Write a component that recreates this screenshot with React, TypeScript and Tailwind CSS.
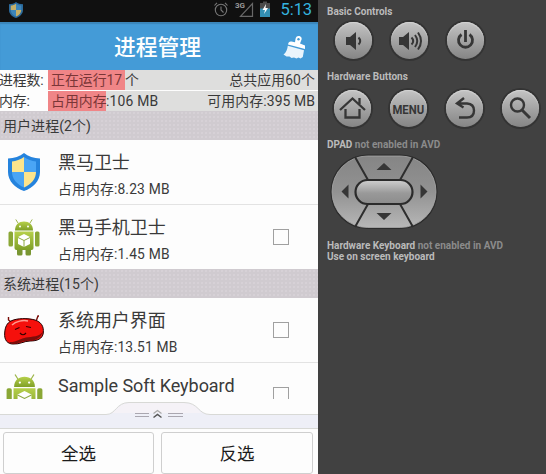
import React from "react";

const FONT = "font-['Roboto','Noto_Sans_CJK_SC',sans-serif]";

function Shield({ className, dim = false }: { className: string; dim?: boolean }) {
  const blue = dim ? "#2b6a9c" : "#2583dd";
  const light = dim ? "#3d86ba" : "#4aa5f5";
  const yellow = dim ? "#c5af68" : "#fde48b";
  return (
    <svg className={className} viewBox="0 0 32 38" preserveAspectRatio="none">
      <path d="M16 0C12 3.500 6 5 0 5.500V19C0 28 7 35 16 38C25 35 32 28 32 19V5.500C26 5 20 3.500 16 0Z" fill={blue} />
      <path d="M16 4C12.500 6.500 8 8 4 8.500V19H16Z" fill={yellow} />
      <path d="M16 4C19.500 6.500 24 8 28 8.500V19H16Z" fill={light} />
      <path d="M4 19H16V34.500C9 31.500 4 26 4 19Z" fill={light} />
      <path d="M28 19H16V34.500C23 31.500 28 26 28 19Z" fill={yellow} />
    </svg>
  );
}

function Android({ className }: { className: string }) {
  return (
    <svg className={className} viewBox="0 0 32 37" preserveAspectRatio="none">
      <defs>
        <linearGradient id="droid" x1="0" y1="0" x2="0" y2="1">
          <stop offset="0" stopColor="#b6d04a" />
          <stop offset="1" stopColor="#7f9f28" />
        </linearGradient>
      </defs>
      <path d="M10 4L8 .8M22 4L24 .8" stroke="#9db54c" strokeWidth="1" strokeLinecap="round" />
      <path d="M7 11.500C7 5.500 11 2.500 16 2.500S25 5.500 25 11.500Z" fill="url(#droid)" />
      <circle cx="12" cy="7.500" r="1" fill="#fff" />
      <circle cx="20" cy="7.500" r="1" fill="#fff" />
      <rect x=".5" y="12.500" width="4.500" height="15" rx="1.500" fill="#8aa735" />
      <rect x="27" y="12.500" width="4.500" height="15" rx="1.500" fill="#8aa735" />
      <path d="M9 27H14.500V35Q14.500 36.500 13 36.500H10.500Q9 36.500 9 35ZM17.500 27H23V35Q23 36.500 21.500 36.500H19Q17.500 36.500 17.500 35Z" fill="#799632" />
      <path d="M6.500 12.500H25.500V29Q25.500 31 23.500 31H8.500Q6.500 31 6.500 29Z" fill="url(#droid)" />
      <path d="M16 15L22 18V25L16 28L10 25V18Z" fill="#fff" />
      <path d="M10 18.500L16 21.500L22 18.500M16 21.500V28" stroke="#8eaa42" strokeWidth="1" fill="none" />
    </svg>
  );
}

function Bean({ className }: { className: string }) {
  return (
    <svg className={className} viewBox="0 0 40 31">
      <path d="M7 7L4.500 5V2M32.500 5L34 1H35" stroke="#7a0b06" strokeWidth="1.400" fill="none" />
      <path d="M7 6C13 3 24 3 31 5C37 7 40 11 39.300 18C38.500 24 33 26 26 26C20 26 16 29.500 9 29C3.500 29 0 25 .7 18C1 12 3 8 7 6Z" fill="#f5100c" stroke="#210000" strokeWidth="1" />
      <path d="M39 16C36 22 28 21.500 22 22.500C17 23.500 12 27.500 5 27C8 30 15 28 20 26C26 25.500 36 27 39 16Z" fill="#7d0d0a" />
      <path d="M8 10C12 6 19 5 24 6" stroke="#ff9c91" strokeWidth="1.500" fill="none" />
      <path d="M11 14.500L15.500 12.500M22 11.500L27 12.500M16 18Q19 21.500 22 18" stroke="#350201" strokeWidth="1.200" fill="none" />
    </svg>
  );
}

function StatusBar() {
  return (
    <div className="flex h-[22px] items-start bg-[#101010] pl-[9px] pr-[6px]">
      <Shield dim className="mt-[2px] h-4 w-[14px]" />
      <svg className="ml-[190px] mt-[1px] h-[17px] w-[60px]" viewBox="213 1 60 17" fill="none">
        <circle cx="221" cy="10" r="5.700" stroke="#777" strokeWidth="1.100" />
        <path d="M221 6.500V10L223.500 12.500M214.500 5.500L217 2.800M227.500 5.500L225 2.800" stroke="#777" strokeWidth="1.100" />
        <path d="M240.500 16.300H252.500V3.500Z" stroke="#686868" strokeWidth="1.200" />
        <text x="235" y="8.300" fontSize="8" fontWeight="700" fill="#999" fontFamily="Roboto">3G</text>
        <path d="M263 1.500H267V3H270V9H260V3H263Z" fill="#4b4b4b" />
        <path d="M260 8.500H270V17H260Z" fill="#338fb4" />
        <path d="M266 4L262.500 10H265L264 14L268 8H265.500Z" fill="#fff" />
      </svg>
      <span className="ml-auto text-[16.500px] leading-[20px] tracking-[-0.100px] text-[#35b3df]">5:13</span>
    </div>
  );
}

function Header() {
  return (
    <div className="grid h-12 grid-cols-[1fr_auto_1fr] items-center bg-[#449bd7] shadow-[inset_0_2px_1px_#3b86ba]">
      <span />
      <h1 className="pr-[3px] pt-[2px] text-[21.800px] font-medium leading-[48px] text-white">进程管理</h1>
      <svg className="mr-3 h-[23px] w-[23px] justify-self-end" viewBox="0 0 23 23">
        <path d="M15.500 0C18.500 0 19.500 2.500 18 5L17 7.500L22 9.500V13L5 8.500Q5.500 5 8.500 5.500L12 6.300L12.500 3Q13 0 15.500 0Z" fill="#fff" />
        <circle cx="15.500" cy="3.200" r="1.200" fill="#449bd7" />
        <path d="M4.800 9.800L21 14.300L19.800 21L17.500 22.500L15.500 21.500L13.500 22.500L11 21.500L8.500 22L6.500 20.500L3.500 20.500L.5 18.500C3 17 4.500 13 4.800 9.800Z" fill="#e9f4fc" />
      </svg>
    </div>
  );
}

function InfoRow({ label, mark, rest, right, markClass }: { label: string; mark: string; rest: string; right: string; markClass: string }) {
  return (
    <div className="flex h-[20px] whitespace-nowrap text-[13.900px] leading-[21px] text-[#393939]">
      <span className="w-12 shrink-0 bg-[#fdfdfd] tracking-[-0.100px]"><span className="-ml-px">{label}</span></span>
      <div className="flex flex-1 bg-[#dededd] pr-[3px]">
        <span className={`${markClass} bg-[#f08587] pl-[3px] text-[#7a3637]`}>{mark}</span>
        <span className="-ml-px pl-px tracking-[0.200px]">{rest}</span>
        <span className="ml-auto tracking-[0.100px]">{right}</span>
      </div>
    </div>
  );
}

function Section({ children }: { children: React.ReactNode }) {
  return (
    <div className="h-[29px] bg-[#d0cbd0] bg-[radial-gradient(#d7d2d7_0.7px,transparent_0.8px)] bg-[size:4px_4px] pl-[3px] text-[14px] leading-[31px] tracking-[0.050px] text-[#393939]">
      {children}
    </div>
  );
}

function Row({ icon, name, mem, check = true, line = true }: { icon: React.ReactNode; name: string; mem?: string; check?: boolean; line?: boolean }) {
  return (
    <div className={`flex items-center bg-[#fdfdfd] ${line ? "h-[65px] border-b border-[#e3e3e3]" : "h-[64px]"}`}>
      <div className="flex w-[58px] shrink-0">{icon}</div>
      <div className="flex h-16 flex-1 flex-col whitespace-nowrap pt-[9px] text-[#3a3a3a]">
        <span className="text-[18px] leading-[27px] tracking-[-0.050px]">{name}</span>
        {mem && <span className="text-[13.800px] leading-[27px] tracking-[0.180px]">{mem}</span>}
      </div>
      {check && <span className="mr-[29px] size-4 border border-[#a0a0a0]" />}
    </div>
  );
}

function Drawer() {
  return (
    <svg className="h-[30px] w-[318px] bg-[#fdfdfd]" viewBox="0 399 318 30">
      <path d="M0 414.500H106C116 414.500 116 402.500 129 402.500H184C199 402.500 198 414.500 210 414.500H318V428.500H0Z" fill="#eeeff7" />
      <path d="M111 413C118 410 119 403 129 403H184C196 403 197 410 202 413Z" fill="#f5f2f7" />
      <path d="M0 414.500H106C116 414.500 116 402.500 129 402.500H184C199 402.500 198 414.500 210 414.500H318M0 428.500H318" stroke="#d8d9d6" fill="none" />
      <path d="M135 413.500H149M135 416.500H149M168 413.500H183M168 416.500H183" stroke="#aaa7b0" strokeWidth="1.200" />
      <path d="M153.500 413.500L157.500 410.500L161.500 413.500" stroke="#aaa" strokeWidth="1.300" fill="none" />
      <path d="M153.500 417.500L157.500 414.500L161.500 417.500" stroke="#555" strokeWidth="1.500" fill="none" />
    </svg>
  );
}

function RoundButton({ children }: { children: React.ReactNode }) {
  return (
    <span className="grid size-[37px] place-items-center rounded-full bg-linear-to-b from-[#c4c4c4] to-[#858585] text-[#363636] shadow-[0_0_0_2px_#343434,inset_0_1px_1px_#d4d4d4]">
      {children}
    </span>
  );
}

function Icon({ children }: { children: React.ReactNode }) {
  return (
    <svg className="size-[37px]" viewBox="0 0 37 37" fill="none" stroke="currentColor" strokeWidth="2">
      {children}
    </svg>
  );
}

function Dpad() {
  return (
    <svg className="h-[78px] w-[109px]" viewBox="329 153 109 78">
      <defs>
        <linearGradient id="pad" x1="0" y1="0" x2="0" y2="1">
          <stop offset="0" stopColor="#858585" />
          <stop offset="0.5" stopColor="#929292" />
          <stop offset="1" stopColor="#b7b7b7" />
        </linearGradient>
        <linearGradient id="center" x1="0" y1="0" x2="0" y2="1">
          <stop offset="0" stopColor="#d0d0d0" />
          <stop offset="0.55" stopColor="#999" />
          <stop offset="1" stopColor="#8c8c8c" />
        </linearGradient>
      </defs>
      <rect x="330.500" y="154.500" width="107" height="74.500" rx="37" fill="#2c2c2c" />
      <rect x="332" y="156" width="104" height="71.500" rx="35.700" fill="url(#pad)" stroke="#aaa" strokeWidth=".8" />
      <path d="M355 157L368 180M413 157L400 180M355 227L368 204M413 227L400 204" stroke="#2e2e2e" strokeWidth="2" />
      <rect x="355.500" y="180" width="57" height="24" rx="12" fill="url(#center)" stroke="#2b2b2b" strokeWidth="2.200" />
      <path d="M376.500 170H391.500L384 163ZM376.500 213H391.500L384 220ZM348.500 184.500V198.500L341.500 191.500ZM420.500 184.500V198.500L427.500 191.500Z" fill="#363636" />
    </svg>
  );
}

function Controls() {
  return (
    <div className="flex h-[474px] flex-1 flex-col bg-[#414141] pl-[9px] text-[10px] font-bold leading-[11px] text-[#bbb]">
      <p className="mt-[6px]">Basic Controls</p>
      <div className="ml-[8px] mt-[5px] flex gap-[19px]">
        <RoundButton>
          <Icon>
            <path d="M11 15H15L21 10V28L15 23H11Z" fill="currentColor" stroke="none" />
            <path d="M23.500 15.500Q27 19 23.500 22.500" />
          </Icon>
        </RoundButton>
        <RoundButton>
          <Icon>
            <path d="M8 15H12L18 10V28L12 23H8Z" fill="currentColor" stroke="none" />
            <path d="M20.500 15.500Q24 19 20.500 22.500M24 13Q28.500 19 24 25M27 10.500Q33 19 27 27.500" />
          </Icon>
        </RoundButton>
        <RoundButton>
          <Icon>
            <path d="M14.500 12.500A7 7 0 1 0 22.500 12.500M18.500 8V20" strokeWidth="2.800" />
          </Icon>
        </RoundButton>
      </div>
      <p className="mt-[12px]">Hardware Buttons</p>
      <div className="ml-[7px] mt-[8px] flex gap-[19px]">
        <RoundButton>
          <Icon>
            <path d="M6 20L18.500 8.500L31 20M25.500 14V8M11.500 19V27.500H25.500V19" strokeWidth="2.300" />
          </Icon>
        </RoundButton>
        <RoundButton>
          <span className="origin-center scale-x-[0.920] pt-[3px] text-[12.300px]">MENU</span>
        </RoundButton>
        <RoundButton>
          <Icon>
            <path d="M18 8L11 13.500L17.500 17.500M11.500 13.500H21Q28 14 28 20.500Q28 27.500 21 27.500H13" strokeWidth="2.400" />
          </Icon>
        </RoundButton>
        <RoundButton>
          <Icon>
            <circle cx="15.500" cy="15" r="6.500" strokeWidth="2.400" />
            <path d="M20 20L28 28" strokeWidth="3" />
          </Icon>
        </RoundButton>
      </div>
      <p className="mt-[12px]">DPAD <span className="text-[#8b8b8b]">not enabled in AVD</span></p>
      <div className="ml-[2px] mt-[3px]"><Dpad /></div>
      <p className="mt-[9px]">Hardware Keyboard <span className="text-[#8b8b8b]">not enabled in AVD</span></p>
      <p>Use on screen keyboard</p>
    </div>
  );
}

export default function App() {
  return (
    <div className={`flex h-[474px] w-[546px] overflow-hidden bg-[#414141] ${FONT}`}>
      <div className="h-[474px] w-[318px] shrink-0 overflow-hidden bg-[#fdfdfd]">
        <StatusBar />
        <Header />
        <div className="flex flex-col gap-px">
          <InfoRow label="进程数:" mark="正在运行17" rest="个" right="总共应用60个" markClass="w-[77px]" />
          <InfoRow label="内存:" mark="占用内存" rest=":106 MB" right="可用内存:395 MB" markClass="w-[58px]" />
        </div>
        <div className="h-[288px] overflow-hidden">
          <Section>用户进程(2个)</Section>
          <Row icon={<Shield className="ml-2 h-[38px] w-8" />} name="黑马卫士" mem="占用内存:8.23 MB" check={false} />
          <Row icon={<Android className="ml-2 h-[37px] w-8" />} name="黑马手机卫士" mem="占用内存:1.45 MB" line={false} />
          <Section>系统进程(15个)</Section>
          <Row icon={<Bean className="ml-1 h-[31px] w-10" />} name="系统用户界面" mem="占用内存:13.51 MB" />
          <Row icon={<Android className="ml-[6px] h-[42px] w-[37px]" />} name="Sample Soft Keyboard" />
        </div>
        <Drawer />
        <div className="flex gap-[7px] px-[3px] pt-[3px] text-[17.500px] text-[#1c1c1c]">
          <button className="h-[42px] w-[151px] rounded-[3px] border border-[#cfcfcf] pt-[2px]">全选</button>
          <button className="h-[42px] w-[152px] rounded-[3px] border border-[#cfcfcf] pt-[2px]">反选</button>
        </div>
      </div>
      <Controls />
    </div>
  );
}
